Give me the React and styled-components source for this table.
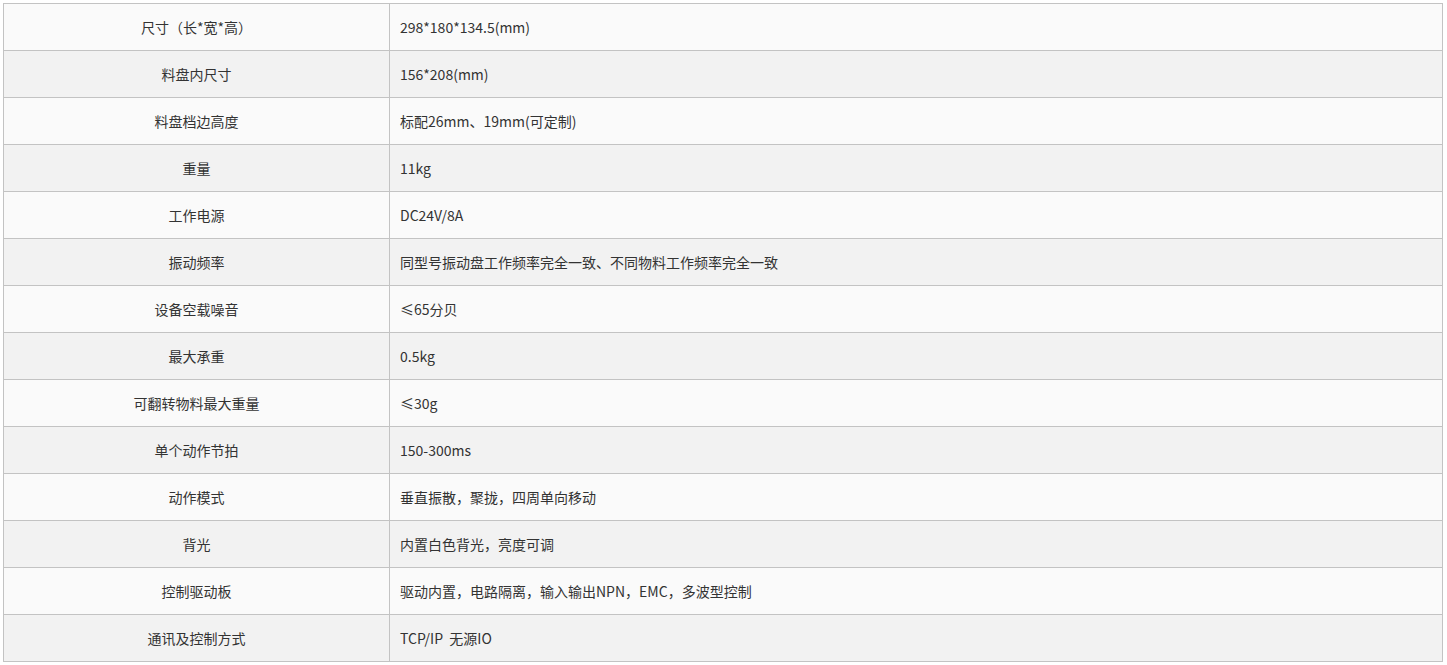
import React from "react";
import styled, { createGlobalStyle } from "styled-components";

const GlobalStyle = createGlobalStyle`
  body {
    margin: 0;
    background: #ffffff;
    font-family: "Noto Sans CJK SC", "Noto Sans", sans-serif;
  }
`;

const specs = [
  ["尺寸（长*宽*高）", "298*180*134.5(mm)"],
  ["料盘内尺寸", "156*208(mm)"],
  ["料盘档边高度", "标配26mm、19mm(可定制)"],
  ["重量", "11kg"],
  ["工作电源", "DC24V/8A"],
  ["振动频率", "同型号振动盘工作频率完全一致、不同物料工作频率完全一致"],
  ["设备空载噪音", "≤65分贝"],
  ["最大承重", "0.5kg"],
  ["可翻转物料最大重量", "≤30g"],
  ["单个动作节拍", "150-300ms"],
  ["动作模式", "垂直振散，聚拢，四周单向移动"],
  ["背光", "内置白色背光，亮度可调"],
  ["控制驱动板", "驱动内置，电路隔离，输入输出NPN，EMC，多波型控制"],
  ["通讯及控制方式", "TCP/IP  无源IO"],
];

const App = () => (
  <>
    <GlobalStyle />
    <Wrapper>
      <SpecTable>
        <tbody>
          {specs.map(([name, value], i) => (
            <Row key={name} $even={i % 2 === 1}>
              <NameCell>{name}</NameCell>
              <ValueCell>{value}</ValueCell>
            </Row>
          ))}
        </tbody>
      </SpecTable>
    </Wrapper>
  </>
);

const Wrapper = styled.div`
  padding: 3px;
  width: 1441px;
`;

const SpecTable = styled.table`
  width: 1440px;
  border-collapse: collapse;
  table-layout: fixed;
  color: #333333;
  font-size: 14px;
`;

const Row = styled.tr`
  background: ${(p) => (p.$even ? "#f2f2f2" : "#fafafa")};
`;

const Cell = styled.td`
  border: 1px solid #c3c3c3;
  height: 47px;
  padding: 0 10px;
  box-sizing: border-box;
  line-height: 20px;
  white-space: pre;
`;

const NameCell = styled(Cell)`
  width: 386px;
  text-align: center;
`;

const ValueCell = styled(Cell)`
  text-align: left;
`;

export default App;
